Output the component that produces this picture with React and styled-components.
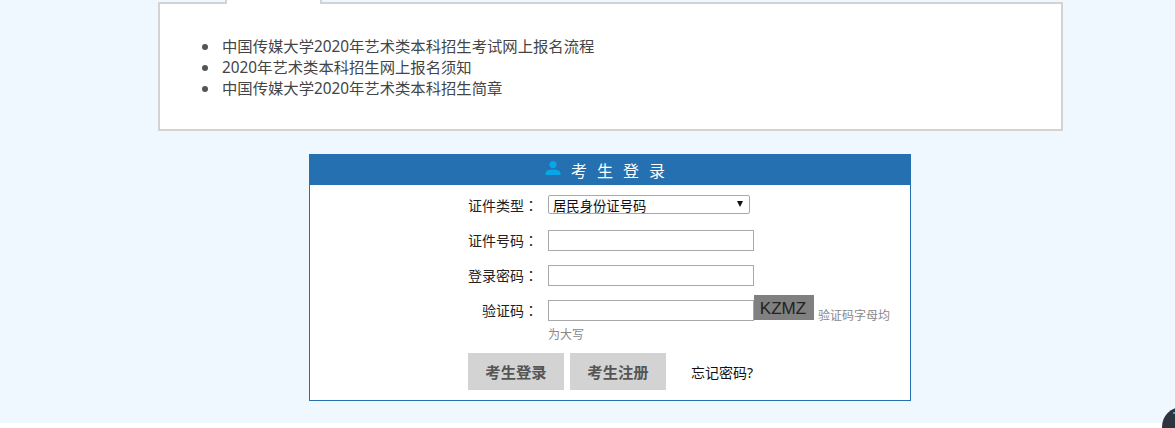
import React from "react";
import styled, { createGlobalStyle } from "styled-components";

const Global = createGlobalStyle`
  html, body {
    margin: 0;
    padding: 0;
    height: 428px;
    overflow: hidden;
    background: #fff;
    font-family: "Noto Sans", "Noto Sans CJK SC", sans-serif;
  }
`;

const Page = styled.div`
  height: 423px;
  background: #eff7ff;
  padding: 2px 0 0 158px;
  box-sizing: border-box;
`;

const Notice = styled.section`
  position: relative;
  box-sizing: border-box;
  width: 905px;
  height: 129px;
  border: 2px solid #d3d3d3;
  background: #fff;
  padding: 32px 0 0 62px;
`;

const ActiveTab = styled.div`
  position: absolute;
  top: -4px;
  left: 65px;
  box-sizing: border-box;
  width: 97px;
  height: 4px;
  background: #fff;
  border-left: 2px solid #d3d3d3;
  border-right: 2px solid #d3d3d3;
`;

const NoticeList = styled.ul`
  margin: 0;
  padding: 0;
  list-style: none;
`;

const NoticeItem = styled.li`
  position: relative;
  height: 21px;
  line-height: 21px;
  font-size: 15.33px;
  color: #444;

  &::before {
    content: "";
    position: absolute;
    left: -20px;
    top: 8px;
    width: 6px;
    height: 6px;
    border-radius: 50%;
    background: #555;
  }
`;

const Login = styled.section`
  box-sizing: border-box;
  width: 602px;
  height: 247px;
  margin: 23px 0 0 151px;
  border: 1px solid #2470b0;
  background: #fff;
`;

const LoginHeader = styled.h2`
  display: flex;
  align-items: center;
  justify-content: center;
  gap: 10px;
  height: 31px;
  margin: -1px -1px 0;
  background: #2470b0;
  color: #fff;
  font-size: 16px;
  font-weight: 400;
  letter-spacing: 10px;
`;

const UserIcon = styled.svg`
  width: 16px;
  height: 14px;
  margin-top: -3px;
  fill: #08a5e8;
`;

const Form = styled.form`
  padding-top: 10px;
`;

const Row = styled.div`
  display: grid;
  grid-template-columns: 228px 1fr;
  column-gap: 10px;
  margin-bottom: ${(p) => p.$gap}px;
`;

const Label = styled.label`
  padding-top: ${(p) => p.$offset || 0}px;
  text-align: right;
  font-family: "Noto Sans CJK TC", "Noto Sans CJK SC", sans-serif;
  font-size: 14px;
  line-height: 20px;
  color: #222;
`;

const SelectBox = styled.div`
  position: relative;
  box-sizing: border-box;
  width: 202px;
  height: 19px;
  border: 1px solid #a9a9a9;
  border-radius: 2px;
  padding-left: 4px;
  font-size: 13.33px;
  line-height: 20px;
  color: #111;
  overflow: hidden;

  &::after {
    content: "";
    position: absolute;
    top: 5px;
    right: 6px;
    border-left: 3px solid transparent;
    border-right: 3px solid transparent;
    border-top: 6px solid #111;
  }
`;

const TextInput = styled.input`
  box-sizing: border-box;
  width: 206px;
  height: 21px;
  margin: ${(p) => p.$top || 0}px 0 0;
  padding: 0 2px;
  border: 1px solid #a9a9a9;
  background: #fff;
  outline: none;
`;

const CaptchaLine = styled.div`
  display: flex;
  align-items: flex-start;
  height: 26px;
`;

const Captcha = styled.span`
  flex: none;
  box-sizing: border-box;
  width: 60px;
  height: 25px;
  padding-right: 2px;
  background: #808080;
  color: #222;
  font-family: "Liberation Sans", Arial, sans-serif;
  font-size: 17px;
  line-height: 28px;
  text-align: center;
`;

const Hint = styled.span`
  display: block;
  margin: ${(p) => p.$top}px 0 0 ${(p) => p.$left || 0}px;
  font-size: 12px;
  line-height: 18px;
  color: #888;
  white-space: nowrap;
`;

const Actions = styled.div`
  display: flex;
  align-items: center;
  gap: 6px;
  padding-left: 158px;
`;

const ActionButton = styled.button`
  width: 96px;
  height: 37px;
  padding: 0 0 2px;
  border: none;
  background: #d3d3d3;
  color: #555;
  font-family: inherit;
  font-size: 15.33px;
  font-weight: 700;
`;

const ForgotLink = styled.a`
  margin-left: 19px;
  font-size: 14px;
  color: #111;
`;

const ChatBubble = styled.div`
  position: absolute;
  left: 1162px;
  top: 407px;
  width: 40px;
  height: 40px;
  border-radius: 50%;
  background: #2f3540;

  &::after {
    content: "";
    position: absolute;
    left: 11px;
    top: 5px;
    width: 3px;
    height: 2px;
    background: #2ba5e8;
  }
`;

const notices = [
  "中国传媒大学2020年艺术类本科招生考试网上报名流程",
  "2020年艺术类本科招生网上报名须知",
  "中国传媒大学2020年艺术类本科招生简章",
];

export default function App() {
  return (
    <>
      <Global />
      <Page>
        <Notice>
          <ActiveTab />
          <NoticeList>
            {notices.map((text) => (
              <NoticeItem key={text}>{text}</NoticeItem>
            ))}
          </NoticeList>
        </Notice>
        <Login>
          <LoginHeader>
            <UserIcon viewBox="0 0 16 14">
              <circle cx="8" cy="3.6" r="3.6" />
              <path d="M0.500 14v-1.500c0-2.800 3.200-4 7.500-4s7.500 1.200 7.500 4v1.500z" />
            </UserIcon>
            <span>考生登录</span>
          </LoginHeader>
          <Form>
            <Row $gap={15}>
              <Label>证件类型：</Label>
              <SelectBox>居民身份证号码</SelectBox>
            </Row>
            <Row $gap={14}>
              <Label>证件号码：</Label>
              <TextInput type="text" />
            </Row>
            <Row $gap={9}>
              <Label>登录密码：</Label>
              <TextInput type="password" />
            </Row>
            <Row $gap={9}>
              <Label $offset={5}>验证码：</Label>
              <div>
                <CaptchaLine>
                  <TextInput type="text" $top={5} />
                  <Captcha>KZMZ</Captcha>
                  <Hint $top={12} $left={4}>验证码字母均</Hint>
                </CaptchaLine>
                <Hint $top={5}>为大写</Hint>
              </div>
            </Row>
            <Actions>
              <ActionButton type="button">考生登录</ActionButton>
              <ActionButton type="button">考生注册</ActionButton>
              <ForgotLink>忘记密码?</ForgotLink>
            </Actions>
          </Form>
        </Login>
      </Page>
      <ChatBubble />
    </>
  );
}
